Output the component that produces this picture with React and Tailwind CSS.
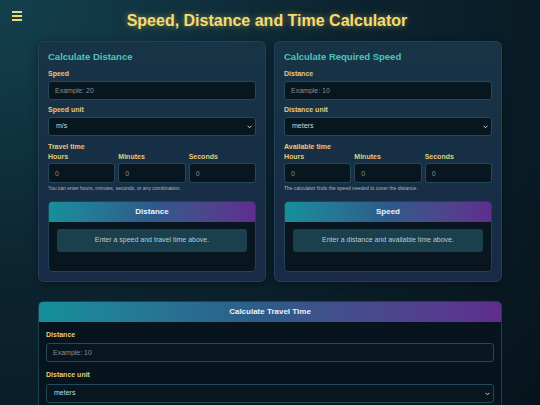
import React from "react";

function Label({ children, className = "" }) {
  return (
    <div className={`text-[7px] font-bold leading-[9px] text-[#e3cb7c] ${className}`}>{children}</div>
  );
}

function TextInput({ placeholder, className = "" }) {
  return (
    <input
      placeholder={placeholder}
      className={`block w-full h-[19px] rounded-[3px] border border-[#24495a] bg-[#08161f] px-[6px] text-[7px] text-[#cfd8dc] placeholder:text-[#7f939c] outline-none ${className}`}
    />
  );
}

function Select({ value }) {
  return (
    <div className="relative h-[19px] w-full rounded-[3px] border border-[#24495a] bg-[#08161f] flex items-center px-[7px]">
      <span className="text-[7px] text-[#cfd8dc]">{value}</span>
      <svg className="absolute right-[3px] top-[7px]" width="5" height="4" viewBox="0 0 5 4">
        <path d="M0.6 0.8 L2.5 2.8 L4.4 0.8" stroke="#c9d3d8" strokeWidth="1" fill="none" />
      </svg>
    </div>
  );
}

function TimeInputs() {
  return (
    <div className="grid grid-cols-3 gap-[3px]">
      {["Hours", "Minutes", "Seconds"].map((t) => (
        <div key={t} className="flex flex-col gap-[2px]">
          <Label>{t}</Label>
          <TextInput placeholder="0" className="h-[20px]" />
        </div>
      ))}
    </div>
  );
}

function ResultBox({ title, text }) {
  return (
    <div className="mt-[9px] rounded-[4px] border border-[#1e4456] bg-[#09161f] overflow-hidden">
      <div className="h-[20px] flex items-center justify-center bg-gradient-to-r from-[#13909c] via-[#2d5a8a] to-[#5e2d8f] text-[8px] font-bold text-[#eef2f6]">
        {title}
      </div>
      <div className="px-[8px] pt-[7px] pb-[19px]">
        <div className="h-[23px] rounded-[3px] bg-[#1a3f4d] flex items-center justify-center text-[7px] text-[#b9cbd2]">
          {text}
        </div>
      </div>
    </div>
  );
}

function Card({ title, fieldLabel, fieldPh, unitLabel, unitValue, timeLabel, help, resTitle, resText }) {
  return (
    <div className="rounded-[6px] border border-[#22405a] bg-gradient-to-b from-[#173446] to-[#182a45] px-[9px] pt-[9px] pb-[9px] shadow-[0_2px_8px_rgba(0,0,0,0.35)]">
      <div className="text-[9.5px] font-bold leading-[12px] text-[#4cc6bb]">{title}</div>
      <Label className="mt-[6px]">{fieldLabel}</Label>
      <TextInput placeholder={fieldPh} className="mt-[3px]" />
      <Label className="mt-[5px]">{unitLabel}</Label>
      <div className="mt-[3px]">
        <Select value={unitValue} />
      </div>
      <Label className="mt-[6px]">{timeLabel}</Label>
      <div className="mt-[1px]">
        <TimeInputs />
      </div>
      <div className="mt-[2px] text-[5px] leading-[7px] text-[#a8b8c0]">{help}</div>
      <ResultBox title={resTitle} text={resText} />
    </div>
  );
}

export default function App() {
  return (
    <div
      className="min-h-screen w-full bg-[radial-gradient(ellipse_at_top_left,#14404e_0%,#0c2430_45%,#06121a_100%)] pb-[20px]"
      style={{ fontFamily: '"Liberation Sans", Arial, sans-serif' }}
    >
      <header className="relative h-[41px] flex items-center justify-center">
        <button className="absolute left-[11px] top-[10px] flex flex-col gap-[2.5px] p-[1px]">
          <span className="block w-[10px] h-[1.5px] bg-[#f0d77a]" />
          <span className="block w-[10px] h-[1.5px] bg-[#f0d77a]" />
          <span className="block w-[10px] h-[1.5px] bg-[#f0d77a]" />
        </button>
        <h1 className="text-[16px] font-bold text-[#f5dc73] [text-shadow:0_0_6px_rgba(245,210,90,0.55)] -translate-x-[3px]">
          Speed, Distance and Time Calculator
        </h1>
      </header>
      <main className="mx-auto w-[464px]">
        <div className="grid grid-cols-2 gap-[8px]">
          <Card
            title="Calculate Distance"
            fieldLabel="Speed"
            fieldPh="Example: 20"
            unitLabel="Speed unit"
            unitValue="m/s"
            timeLabel="Travel time"
            help="You can enter hours, minutes, seconds, or any combination."
            resTitle="Distance"
            resText="Enter a speed and travel time above."
          />
          <Card
            title="Calculate Required Speed"
            fieldLabel="Distance"
            fieldPh="Example: 10"
            unitLabel="Distance unit"
            unitValue="meters"
            timeLabel="Available time"
            help="The calculator finds the speed needed to cover the distance."
            resTitle="Speed"
            resText="Enter a distance and available time above."
          />
        </div>
        <section className="mt-[19px] rounded-[5px] border border-[#1d4152] bg-[#07141d] overflow-hidden">
          <div className="h-[20px] flex items-center justify-center bg-gradient-to-r from-[#13909c] via-[#2d5a8a] to-[#5e2d8f] text-[8px] font-bold text-[#eef2f6]">
            Calculate Travel Time
          </div>
          <div className="px-[7px] pt-[8px] pb-[10px]">
            <Label>Distance</Label>
            <TextInput placeholder="Example: 10" className="mt-[4px]" />
            <Label className="mt-[8px]">Distance unit</Label>
            <div className="mt-[5px]">
              <Select value="meters" />
            </div>
          </div>
        </section>
      </main>
    </div>
  );
}
